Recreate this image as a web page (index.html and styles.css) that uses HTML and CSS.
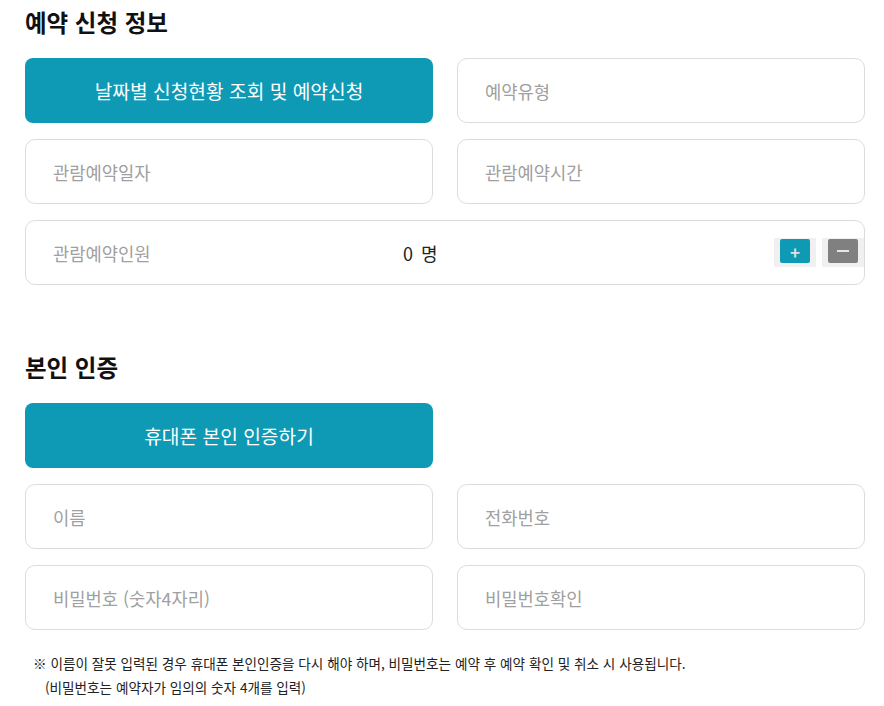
FILE: index.html
```html
<!DOCTYPE html>
<html lang="ko">
<head>
<meta charset="utf-8">
<link rel="stylesheet" href="styles.css">
</head>
<body>
<div class="page">
  <section class="section">
    <h2 class="title">예약 신청 정보</h2>
    <div class="grid">
      <button class="btn">날짜별 신청현황 조회 및 예약신청</button>
      <div class="field">예약유형</div>
      <div class="field">관람예약일자</div>
      <div class="field">관람예약시간</div>
      <div class="field counter">
        <span class="counter-label">관람예약인원</span>
        <span class="counter-value">0<span class="unit">명</span></span>
        <div class="steps">
          <span class="step"><span class="step-inner plus">+</span></span>
          <span class="step"><span class="step-inner minus"></span></span>
        </div>
      </div>
    </div>
  </section>
  <section class="section second">
    <h2 class="title">본인 인증</h2>
    <div class="grid">
      <button class="btn">휴대폰 본인 인증하기</button>
      <div class="empty"></div>
      <div class="field">이름</div>
      <div class="field">전화번호</div>
      <div class="field">비밀번호 (숫자4자리)</div>
      <div class="field">비밀번호확인</div>
    </div>
    <div class="notes">
      <p class="note">※ 이름이 잘못 입력된 경우 휴대폰 본인인증을 다시 해야 하며, 비밀번호는 예약 후 예약 확인 및 취소 시 사용됩니다.</p>
      <p class="note indent">(비밀번호는 예약자가 임의의 숫자 4개를 입력)</p>
    </div>
  </section>
</div>
</body>
</html>
```
FILE: styles.css
```css
* { box-sizing: border-box; }
body {
  margin: 0;
  background: #fff;
  font-family: "Noto Sans CJK KR", "Noto Sans", sans-serif;
  color: #222;
}
.page {
  width: 865px;
  padding: 6px 0 0 25px;
}
.title {
  margin: 0 0 20px;
  font-size: 23.5px;
  line-height: 32px;
  font-weight: 700;
  color: #111;
}
.second { margin-top: 66px; }
.grid {
  display: grid;
  grid-template-columns: 1fr 1fr;
  grid-auto-rows: 65px;
  gap: 16px 24px;
}
.btn {
  border: 0;
  border-radius: 8px;
  background: #0e9ab5;
  color: #fff;
  font-family: inherit;
  font-size: 19.2px;
  padding: 0;
  cursor: pointer;
}
.field {
  border: 1px solid #dcdcdc;
  border-radius: 10px;
  padding: 0 0 0 27px;
  display: flex;
  align-items: center;
  font-size: 17.7px;
  color: #a0a0a0;
}
.counter {
  grid-column: 1 / 3;
  padding-right: 0;
}
.counter-label { width: 350px; }
.counter-value {
  color: #222;
  font-size: 18px;
}
.unit { margin-left: 8px; }
.steps {
  margin-left: auto;
  display: flex;
  gap: 6px;
}
.step {
  width: 42px;
  height: 29px;
  background: #f0f0f0;
  padding: 1px 6px 4px;
  display: flex;
}
.step-inner {
  width: 30px;
  height: 24px;
  border-radius: 2px;
  display: flex;
  align-items: center;
  justify-content: center;
  color: #e0e0e0;
  font-size: 17px;
  font-weight: 700;
  line-height: 1;
}
.plus { background: #0e9ab5; }
.minus { background: #808080; }
.minus::before {
  content: "";
  width: 12px;
  height: 2px;
  background: #e6e6e6;
}
.notes { margin-top: 21px; padding-left: 8px; }
.note {
  margin: 0;
  font-size: 13.6px;
  line-height: 24px;
  color: #222;
}
.indent { padding-left: 12px; }
```
